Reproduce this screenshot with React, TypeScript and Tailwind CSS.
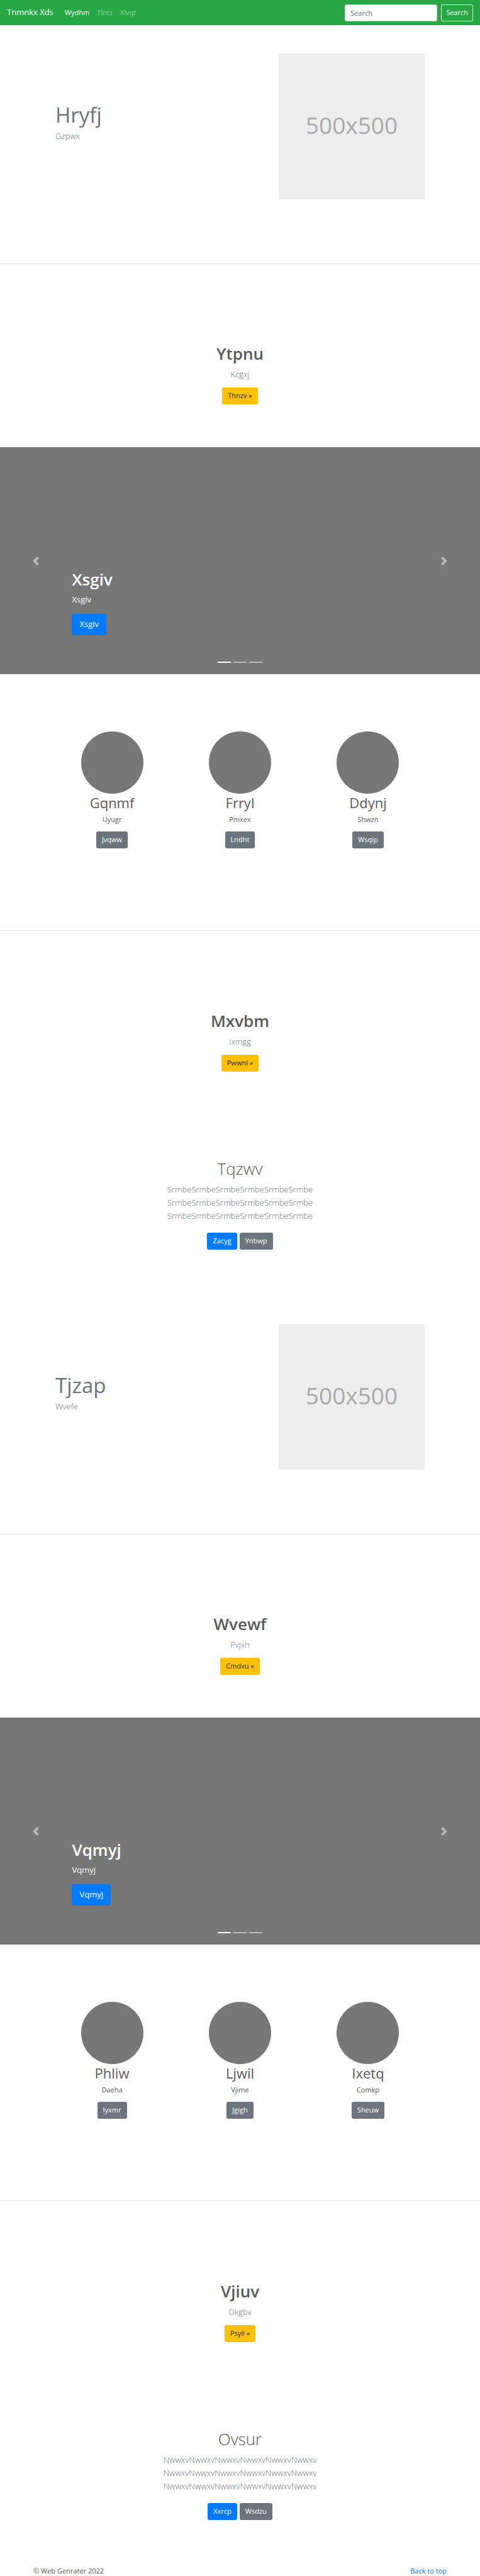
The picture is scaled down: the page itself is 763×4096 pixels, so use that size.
import type { ReactNode } from "react";

type Tone = "primary" | "secondary" | "warning";

const tones: Record<Tone, string> = {
  primary: "bg-[#007bff] text-white",
  secondary: "bg-[#6c757d] text-white",
  warning: "bg-[#ffc107] text-[#212529]",
};

function Button({ tone, large, children }: { tone: Tone; large?: boolean; children: ReactNode }) {
  const size = large ? "h-[34px] px-3 text-[13px] font-medium rounded" : "h-[27px] px-[9px] text-[11px] rounded-[3px]";
  return (
    <button type="button" className={`inline-flex items-center justify-center ${size} ${tones[tone]}`}>
      {children}
    </button>
  );
}

function Navbar() {
  return (
    <header className="flex h-10 items-center bg-[#28a745] px-[11px] text-[11px]">
      <a href="#" className="mr-3 text-[13px] text-white">Tnmnkx Xds</a>
      <nav className="flex flex-1">
        <a href="#" className="px-[6px] text-white">Wydhm</a>
        <a href="#" className="px-[6px] text-white/50">Tlntz</a>
        <a href="#" className="px-[6px] text-white/50">Xlvqt</a>
      </nav>
      <form className="flex gap-[6px]" onSubmit={(e) => e.preventDefault()}>
        <input
          type="search"
          aria-label="Search"
          placeholder="Search"
          className="h-[27px] w-[147px] rounded-[3px] border border-[#ced4da] bg-white px-2 text-[#495057] placeholder:text-[#6c757d]"
        />
        <button type="submit" className="h-[27px] rounded-[3px] border border-white px-[7px] text-white">
          Search
        </button>
      </form>
    </header>
  );
}

function Hero({ title, lead }: { title: string; lead: string }) {
  return (
    <section className="flex justify-between border-b border-[#e5e5e5] px-[88px] pt-[45px] pb-[102px]">
      <div className="pt-20 text-[#6c757d]">
        <h2 className="mb-[5px] text-[33px] leading-9">{title}</h2>
        <p className="text-[13px] leading-[21px] font-light">{lead}</p>
      </div>
      <div
        role="img"
        aria-label="500x500"
        className="flex size-[232px] items-center justify-center bg-[#eeeeee] pb-1 text-[37px] text-[#aaaaaa]"
      >
        500x500
      </div>
    </section>
  );
}

function Announcement({ title, lead, action, className }: { title: string; lead: string; action: string; className: string }) {
  return (
    <section className={`flex flex-col items-center ${className}`}>
      <h1 className="mb-[6px] text-[26px] leading-[34px] font-semibold">{title}</h1>
      <p className="mb-[10px] text-[13px] leading-[21px] font-light text-[#6c757d]">{lead}</p>
      <Button tone="warning">{action} »</Button>
    </section>
  );
}

function Carousel({ text }: { text: string }) {
  return (
    <section className="relative flex h-[361px] flex-col items-start justify-end bg-[#777777] px-[15%] pb-[62px] text-white">
      <h1 className="mb-[5px] text-[26px] leading-[34px] font-semibold">{text}</h1>
      <p className="mb-3 text-[13px] leading-[21px] font-medium">{text}</p>
      <Button tone="primary" large>{text}</Button>
      <button type="button" aria-label="Previous" className="absolute inset-y-0 left-0 flex w-[15%] items-center justify-center opacity-50">
        <svg viewBox="0 0 8 8" className="size-[14px] fill-white">
          <path d="M5.25 0l-4 4 4 4 1.5-1.5L4.25 4l2.5-2.5L5.25 0z" />
        </svg>
      </button>
      <button type="button" aria-label="Next" className="absolute inset-y-0 right-0 flex w-[15%] items-center justify-center opacity-50">
        <svg viewBox="0 0 8 8" className="size-[14px] fill-white">
          <path d="M2.75 0l-1.5 1.5L3.75 4l-2.5 2.5L2.75 8l4-4-4-4z" />
        </svg>
      </button>
      <div className="absolute inset-x-0 bottom-[18px] flex justify-center gap-1">
        <span className="h-[2px] w-[21px] bg-white" />
        <span className="h-[2px] w-[21px] bg-white/50" />
        <span className="h-[2px] w-[21px] bg-white/50" />
      </div>
    </section>
  );
}

function Team({ people }: { people: string[][] }) {
  return (
    <section className="grid grid-cols-3 border-b border-[#e5e5e5] px-[10%] pt-[91px] pb-[130px]">
      {people.map(([name, text, action]) => (
        <div key={name} className="flex flex-col items-center">
          <div className="size-[99px] rounded-full bg-[#777777]" />
          <h2 className="mb-1 text-[22px] leading-7">{name}</h2>
          <p className="mb-[11px] text-[11px] leading-[17px]">{text}</p>
          <Button tone="secondary">{action}</Button>
        </div>
      ))}
    </section>
  );
}

function Album({ title, line, actions }: { title: string; line: string; actions: [string, string] }) {
  return (
    <section className="flex flex-col items-center pb-[73px]">
      <h1 className="mb-[6px] text-[26px] leading-[34px] font-light">{title}</h1>
      <p className="mb-4 text-center text-[13px] leading-[21px] font-light text-[#6c757d]">
        {line}
        <br />
        {line}
        <br />
        {line}
      </p>
      <div className="flex gap-1">
        <Button tone="primary">{actions[0]}</Button>
        <Button tone="secondary">{actions[1]}</Button>
      </div>
    </section>
  );
}

export default function App() {
  return (
    <div className="bg-white font-['Open_Sans','Noto_Sans',sans-serif] text-[#5a5a5a]">
      <Navbar />
      <main>
        <Hero title="Hryfj" lead="Gzpwx" />
        <Announcement title="Ytpnu" lead="Kcgxj" action="Thnzv" className="pt-[125px] pb-[68px]" />
        <Carousel text="Xsgiv" />
        <Team people={[["Gqnmf", "Uyugr", "Jvqww"], ["Frryl", "Pmxex", "Lndht"], ["Ddynj", "Shwzn", "Wsqip"]]} />
        <Announcement title="Mxvbm" lead="Ixmgg" action="Pwwnl" className="pt-[126px] pb-[137px]" />
        <Album title="Tqzwv" line="SrmbeSrmbeSrmbeSrmbeSrmbeSrmbe" actions={["Zacyg", "Ynbwp"]} />
        <Hero title="Tjzap" lead="Wvefe" />
        <Announcement title="Wvewf" lead="Pvjxh" action="Cmdvu" className="pt-[125px] pb-[68px]" />
        <Carousel text="Vqmyj" />
        <Team people={[["Phliw", "Daeha", "Iyxmr"], ["Ljwil", "Vjime", "Jgigh"], ["Ixetq", "Comkp", "Sheuw"]]} />
        <Announcement title="Vjiuv" lead="Dkgbv" action="Psyil" className="pt-[126px] pb-[137px]" />
        <Album title="Ovsur" line="NwwxvNwwxvNwwxvNwwxvNwwxvNwwxv" actions={["Xxrcp", "Wsdzu"]} />
      </main>
      <footer className="flex justify-between px-[53px] text-[11px] leading-4">
        <p>© Web Genrater 2022</p>
        <a href="#" className="text-[#007bff]">Back to top</a>
      </footer>
    </div>
  );
}
